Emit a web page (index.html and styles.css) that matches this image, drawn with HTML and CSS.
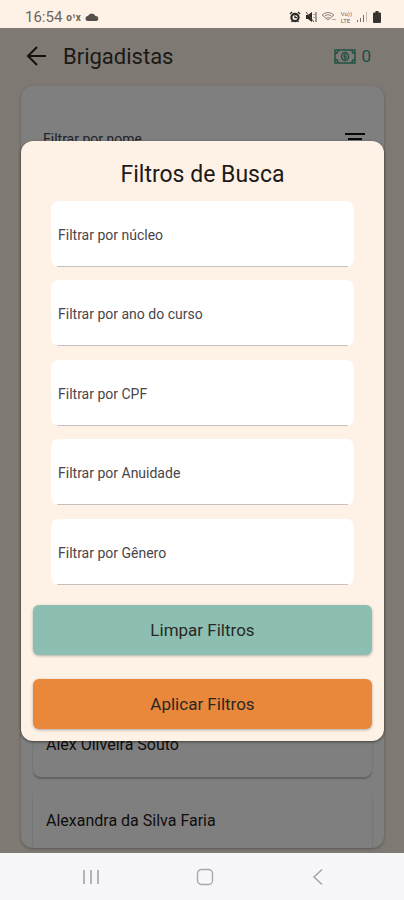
FILE: index.html
```html
<!DOCTYPE html>
<html lang="pt-BR">
<head>
    <meta charset="UTF-8">
    <meta name="viewport" content="width=device-width, initial-scale=1.0">
    <title>Brigadistas</title>
    <link rel="stylesheet" href="styles.css">
</head>
<body>
    <div class="status-bar">
        <span class="clock">16:54</span>
        <span class="carrier">o¹x</span>
        <svg class="cloud" width="14" height="10" viewBox="0 0 14 10"><path d="M3 9a2.500 2.500 0 0 1 0-5 4 4 0 0 1 7.500 0A2.500 2.500 0 0 1 11 9z" fill="#55504c"/></svg>
        <div class="status-icons">
            <svg width="12" height="12" viewBox="0 0 12 12" fill="none" stroke="#2c2825"><circle cx="6" cy="6.500" r="3.600" stroke-width="2.200"/><path d="M6 4.500v2.200h2M1 3l2-2M11 3L9 1M2.500 11l1-1M9.500 11l-1-1" stroke-width="1.300"/></svg>
            <svg width="12" height="12" viewBox="0 0 12 12"><path d="M1 4h2l4-3v10L3 8H1z" fill="#2c2825"/><path d="M1 1l8 10M9 3v1M9 6v1M11 1v10" stroke="#4b4642" fill="none"/></svg>
            <svg width="16" height="12" viewBox="0 0 16 12" fill="none" stroke="#8b8580"><path d="M1 4q6-5 12 0L7 9zM3.500 5q3.500-3 7 0M5.500 7q1.500-1 3 0"/><path d="M11 9l1-1 1 1M13 8l1 1 1-1" stroke="#b5aea8"/></svg>
            <span class="lte">Vo))<br>LTE</span>
            <svg width="12" height="12" viewBox="0 0 12 12"><path d="M1 9h1v2H1zM4 7h1v4H4zM7 4h1v7H7z" fill="#77716c"/><path d="M10 1h1v10h-1z" fill="#c5beb7"/></svg>
            <svg width="10" height="12" viewBox="0 0 10 12"><path d="M3.500 0h3v1.500H8q1 0 1 1V11q0 1-1 1H2q-1 0-1-1V2.500q0-1 1-1h1.500z" fill="#38332f"/></svg>
        </div>
    </div>

    <div class="screen">
        <header class="header">
            <button class="back" aria-label="Voltar">
                <svg width="20" height="20" viewBox="0 0 20 20" fill="none" stroke="#28231f" stroke-width="2"><path d="M20 10H2M11 1L2 10l9 9"/></svg>
            </button>
            <h1>Brigadistas</h1>
            <div class="money">
                <svg width="22" height="15" viewBox="0 0 22 15" fill="none" stroke="#38a183" stroke-width="1.400"><rect x="1" y="1" width="20" height="13"/><path d="M1 4.500q3 0 3-3.500M21 4.500q-3 0-3-3.500M1 10.500q3 0 3 3.500M21 10.500q-3 0-3 3.500"/><ellipse cx="11" cy="7.500" rx="3.500" ry="4"/><path d="M12.500 5.800q-3-1-3 .5t1.500 1.200 1.500 1.200-3 .5M11 4.500v6" stroke-width="1"/></svg>
                <span>0</span>
            </div>
        </header>

        <main class="card">
            <div class="search">
                <input type="text" placeholder="Filtrar por nome" aria-label="Filtrar por nome">
                <button class="filter" aria-label="Filtros">
                    <svg width="22" height="14" viewBox="0 0 22 14" stroke="#111" stroke-width="2"><path d="M1 2h20M4 7h14M8 12h6"/></svg>
                </button>
            </div>
            <ul class="list">
                <li>Alex Oliveira Souto</li>
                <li>Alexandra da Silva Faria</li>
            </ul>
        </main>

        <div class="overlay">
            <form class="modal" role="dialog" aria-labelledby="modal-title">
                <h2 id="modal-title">Filtros de Busca</h2>
                <div class="fields">
                    <input type="text" placeholder="Filtrar por núcleo" aria-label="Filtrar por núcleo">
                    <input type="text" placeholder="Filtrar por ano do curso" aria-label="Filtrar por ano do curso">
                    <input type="text" placeholder="Filtrar por CPF" aria-label="Filtrar por CPF">
                    <input type="text" placeholder="Filtrar por Anuidade" aria-label="Filtrar por Anuidade">
                    <input type="text" placeholder="Filtrar por Gênero" aria-label="Filtrar por Gênero">
                </div>
                <div class="btns">
                    <button type="reset" class="btn clear">Limpar Filtros</button>
                    <button type="button" class="btn apply">Aplicar Filtros</button>
                </div>
            </form>
        </div>
    </div>

    <nav class="nav-bar">
        <button aria-label="Recentes">
            <svg width="18" height="16" viewBox="0 0 18 16" stroke="#b4b4b8" stroke-width="2"><path d="M2 1v14M9 1v14M16 1v14"/></svg>
        </button>
        <button aria-label="Início">
            <svg width="18" height="18" viewBox="0 0 18 18" fill="none" stroke="#a9a9ad" stroke-width="1.400"><rect x="1.500" y="1.500" width="15" height="15" rx="4"/></svg>
        </button>
        <button aria-label="Voltar">
            <svg width="18" height="18" viewBox="0 0 18 18" fill="none" stroke="#a3a3a7" stroke-width="1.500"><path d="M13 1.500L5 9l8 7.500"/></svg>
        </button>
    </nav>
</body>
</html>
```

FILE: styles.css
```css
* {
    box-sizing: border-box;
}

body {
    font-family: Roboto, "Liberation Sans", sans-serif;
    background-color: #fef2e7;
    color: #1d1a18;
    display: flex;
    flex-direction: column;
    height: 100vh;
    margin: 0;
}

h1, h2 {
    font-weight: 400;
    margin: 0;
}

button {
    font-family: inherit;
    background: none;
    border: none;
    padding: 0;
    cursor: pointer;
}

svg {
    display: block;
}

input {
    font-family: inherit;
    font-size: 14px;
    border: none;
    min-width: 0;
}

input::placeholder {
    color: #49454a;
    opacity: 1;
}

.status-bar {
    display: flex;
    align-items: center;
    height: 28px;
    padding: 6px 22px 0 25px;
    gap: 4px;
    color: #6b6560;
}

.clock {
    font-size: 15px;
}

.carrier {
    font-size: 10px;
    font-weight: bold;
}

.status-icons {
    display: flex;
    align-items: center;
    gap: 4px;
    margin-left: auto;
}

.lte {
    font-size: 6px;
    line-height: 7px;
}

.screen {
    position: relative;
    display: flex;
    flex-direction: column;
    flex: 1;
    min-height: 0;
    overflow: hidden;
}

.header {
    display: flex;
    align-items: center;
    height: 58px;
    padding: 0 33px 2px 26px;
}

.header h1 {
    margin-left: 17px;
    font-size: 22px;
    color: #38322e;
}

.money {
    display: flex;
    align-items: center;
    gap: 5px;
    margin-left: auto;
    font-size: 17px;
    color: #38a183;
}

.card {
    display: flex;
    flex-direction: column;
    justify-content: space-between;
    flex: 1;
    min-height: 0;
    margin: 0 20px 5px 21px;
    background-color: #fff;
    border-radius: 12px;
    box-shadow: 0 1px 3px rgba(0, 0, 0, 0.3);
    overflow: hidden;
}

.search {
    display: flex;
    align-items: center;
    height: 106px;
    padding: 0 18px 0 22px;
}

.search input {
    flex: 1;
    padding: 0;
}

.list {
    display: flex;
    flex-direction: column;
    gap: 10px;
    list-style: none;
    margin: 0 12px -5px;
    padding: 0;
}

.list li {
    display: flex;
    align-items: center;
    height: 66px;
    padding: 0 13px;
    font-size: 16px;
    border-radius: 8px;
    box-shadow: 0 2px 2px rgba(0, 0, 0, 0.25);
}

.overlay {
    position: absolute;
    inset: 0;
    display: flex;
    flex-direction: column;
    justify-content: center;
    padding: 0 20px 0 21px;
    background-color: rgba(0, 0, 0, 0.5);
}

.modal {
    display: flex;
    flex-direction: column;
    padding: 19px 12px 12px;
    background-color: #fef2e7;
    border-radius: 12px;
    box-shadow: 0 1px 3px rgba(0, 0, 0, 0.5);
}

.modal h2 {
    font-size: 23px;
    line-height: 30px;
    text-align: center;
    margin-bottom: 11px;
}

.fields {
    display: flex;
    flex-direction: column;
    justify-content: space-between;
    height: 384px;
    margin: 0 18px 20px;
}

.fields input {
    height: 66px;
    padding: 2px 7px 0;
    background: linear-gradient(#c4c0be, #c4c0be) center bottom / calc(100% - 12px) 1px no-repeat #fff;
    border-radius: 8px;
}

.btns {
    display: flex;
    flex-direction: column;
    gap: 24px;
}

.btn {
    height: 50px;
    font-size: 17px;
    color: #2a2825;
    border-radius: 6px;
    box-shadow: 0 1px 3px rgba(0, 0, 0, 0.3);
}

.clear {
    background-color: #8cbfb1;
}

.apply {
    background-color: #e9883b;
}

.nav-bar {
    display: flex;
    align-items: center;
    justify-content: space-between;
    height: 47px;
    padding: 0 77px 0 82px;
    background-color: #f7f7fa;
}
```
